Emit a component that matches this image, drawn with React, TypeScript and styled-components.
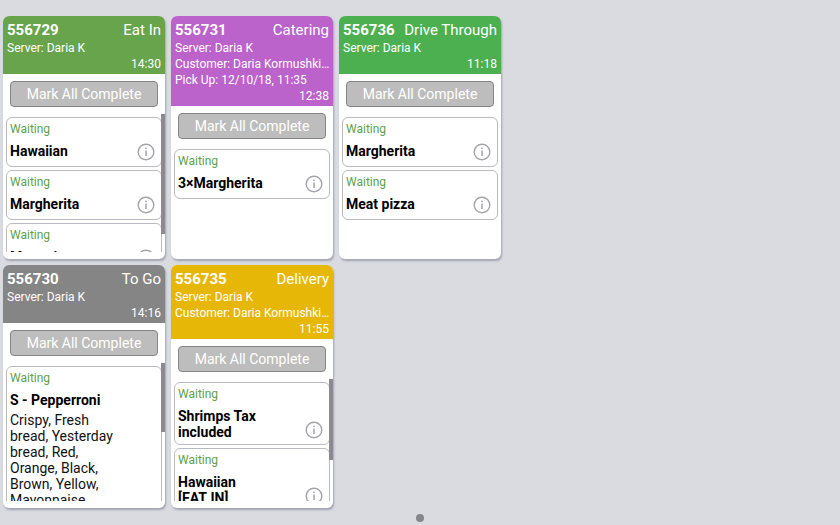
import React from "react";
import styled, { createGlobalStyle } from "styled-components";

const GlobalStyle = createGlobalStyle`
  * { box-sizing: border-box; }
  body {
    margin: 0;
    background: #d9dbe1;
    font-family: Roboto, "Liberation Sans", sans-serif;
    color: #111;
  }
`;

interface Item {
  name: string;
  modifiers?: string;
}

interface Order {
  id: string;
  type: string;
  color: string;
  details: string[];
  time: string;
  items: Item[];
  thumb?: number;
}

const orders: Order[] = [
  {
    id: "556729",
    type: "Eat In",
    color: "#67a44c",
    details: ["Server: Daria K"],
    time: "14:30",
    items: [{ name: "Hawaiian" }, { name: "Margherita" }, { name: "Meat pizza" }],
    thumb: 87,
  },
  {
    id: "556731",
    type: "Catering",
    color: "#bb62cb",
    details: ["Server: Daria K", "Customer: Daria Kormushkina", "Pick Up: 12/10/18, 11:35"],
    time: "12:38",
    items: [{ name: "3×Margherita" }],
  },
  {
    id: "556736",
    type: "Drive Through",
    color: "#4caf50",
    details: ["Server: Daria K"],
    time: "11:18",
    items: [{ name: "Margherita" }, { name: "Meat pizza" }],
  },
  {
    id: "556730",
    type: "To Go",
    color: "#858585",
    details: ["Server: Daria K"],
    time: "14:16",
    items: [
      {
        name: "S - Pepperroni",
        modifiers: "Crispy, Fresh bread, Yesterday bread, Red, Orange, Black, Brown, Yellow, Mayonnaise",
      },
    ],
    thumb: 50,
  },
  {
    id: "556735",
    type: "Delivery",
    color: "#e7b708",
    details: ["Server: Daria K", "Customer: Daria Kormushkina"],
    time: "11:55",
    items: [{ name: "Shrimps Tax included" }, { name: "Hawaiian [EAT\u00a0IN]" }],
    thumb: 66,
  },
];

const Screen = styled.div`
  min-height: 100vh;
  display: flex;
  flex-direction: column;
  justify-content: space-between;
`;

const Board = styled.main`
  display: grid;
  grid-template-columns: repeat(5, 1fr);
  grid-auto-rows: 243px;
  gap: 6px;
  padding: 16px 3px 0;
`;

// Cards fill the board three to a row; the two right-hand columns stay free.
const OrderGroup = styled.div`
  display: grid;
  grid-column: span 3;
  grid-row: span 2;
  grid-template-columns: subgrid;
  grid-template-rows: subgrid;
`;

const Card = styled.article`
  display: flex;
  flex-direction: column;
  min-width: 0;
  padding-bottom: 7px;
  overflow: hidden;
  background: #fff;
  border-radius: 6px;
  box-shadow: 1px 2px 2px rgba(80, 85, 105, 0.4);
`;

const CardHeader = styled.header<{ $color: string }>`
  padding: 4px 0 2px 4px;
  background: ${(p) => p.$color};
  color: #fff;
  font-size: 12px;
  line-height: 16px;
`;

const TitleRow = styled.div`
  display: flex;
  justify-content: space-between;
  padding-right: 4px;
  font-size: 15px;
  line-height: 20px;
  white-space: nowrap;
`;

const OrderId = styled.h2`
  margin: 0;
  font-size: 15px;
  font-weight: 700;
`;

const Detail = styled.div`
  overflow: hidden;
  white-space: nowrap;
  text-overflow: ellipsis;
`;

const Time = styled.div`
  padding-right: 4px;
  text-align: right;
`;

const CompleteButton = styled.button`
  flex: none;
  height: 26px;
  margin: 7px;
  padding: 0;
  border: 1px solid #858585;
  border-radius: 4px;
  background: #bdbdbd;
  color: #fff;
  font: 400 14px/24px Roboto, "Liberation Sans", sans-serif;
`;

const ListArea = styled.div`
  position: relative;
  flex: 1;
  min-height: 0;
`;

const List = styled.ul`
  display: flex;
  flex-direction: column;
  gap: 3px;
  height: 100%;
  margin: 0;
  padding: 3px 3px 0;
  overflow: hidden;
  list-style: none;
`;

const Thumb = styled.div<{ $size: number }>`
  position: absolute;
  top: 0;
  right: 0;
  width: 4px;
  height: ${(p) => p.$size}%;
  background: #8c8a8e;
`;

const ItemCard = styled.li`
  flex: none;
  padding: 3px 6px 4px 3px;
  border: 1px solid #babac2;
  border-radius: 6px;
`;

const Status = styled.div`
  padding-bottom: 5px;
  color: #5f9f49;
  font-size: 12px;
  line-height: 16px;
`;

const ItemRow = styled.div`
  display: flex;
  justify-content: space-between;
`;

const ItemText = styled.div`
  width: 108px;
  padding-top: 1px;
  font-size: 14px;
  line-height: 16px;
`;

const ItemName = styled.div`
  color: #000;
  font-weight: 700;
`;

const Modifiers = styled.div`
  padding: 4px 0 20px;
`;

const InfoButton = styled.button`
  display: flex;
  align-items: center;
  align-self: flex-end;
  height: 20px;
  padding: 0;
  border: 0;
  background: none;
`;

const InfoIcon = () => (
  <svg width="18" height="18" viewBox="0 0 18 18" fill="none" stroke="#a3a3aa">
    <circle cx="9" cy="9" r="7.8" strokeWidth="1.4" />
    <path d="M9 7.5V13" strokeWidth="1.5" />
    <circle cx="9" cy="5.3" r="0.9" fill="#a3a3aa" stroke="none" />
  </svg>
);

const Pager = styled.nav`
  display: flex;
  justify-content: center;
  padding: 6px 0 3px;
`;

const PageDot = styled.button`
  width: 8px;
  height: 8px;
  padding: 0;
  border: 0;
  border-radius: 50%;
  background: #85868a;
`;

const OrderCard = ({ order }: { order: Order }) => (
  <Card>
    <CardHeader $color={order.color}>
      <TitleRow>
        <OrderId>{order.id}</OrderId>
        <span>{order.type}</span>
      </TitleRow>
      {order.details.map((d) => (
        <Detail key={d}>{d}</Detail>
      ))}
      <Time>{order.time}</Time>
    </CardHeader>
    <CompleteButton type="button">Mark All Complete</CompleteButton>
    <ListArea>
      <List>
        {order.items.map((item, i) => (
          <ItemCard key={i}>
            <Status>Waiting</Status>
            <ItemRow>
              <ItemText>
                <ItemName>{item.name}</ItemName>
                {item.modifiers && <Modifiers>{item.modifiers}</Modifiers>}
              </ItemText>
              <InfoButton type="button" aria-label={`Details of ${item.name}`}>
                <InfoIcon />
              </InfoButton>
            </ItemRow>
          </ItemCard>
        ))}
      </List>
      {order.thumb && <Thumb $size={order.thumb} />}
    </ListArea>
  </Card>
);

export default function App() {
  return (
    <>
      <GlobalStyle />
      <Screen>
        <Board>
          <OrderGroup>
            {orders.map((o) => (
              <OrderCard key={o.id} order={o} />
            ))}
          </OrderGroup>
        </Board>
        <Pager aria-label="Pages">
          <PageDot type="button" aria-label="Page 1" />
        </Pager>
      </Screen>
    </>
  );
}
